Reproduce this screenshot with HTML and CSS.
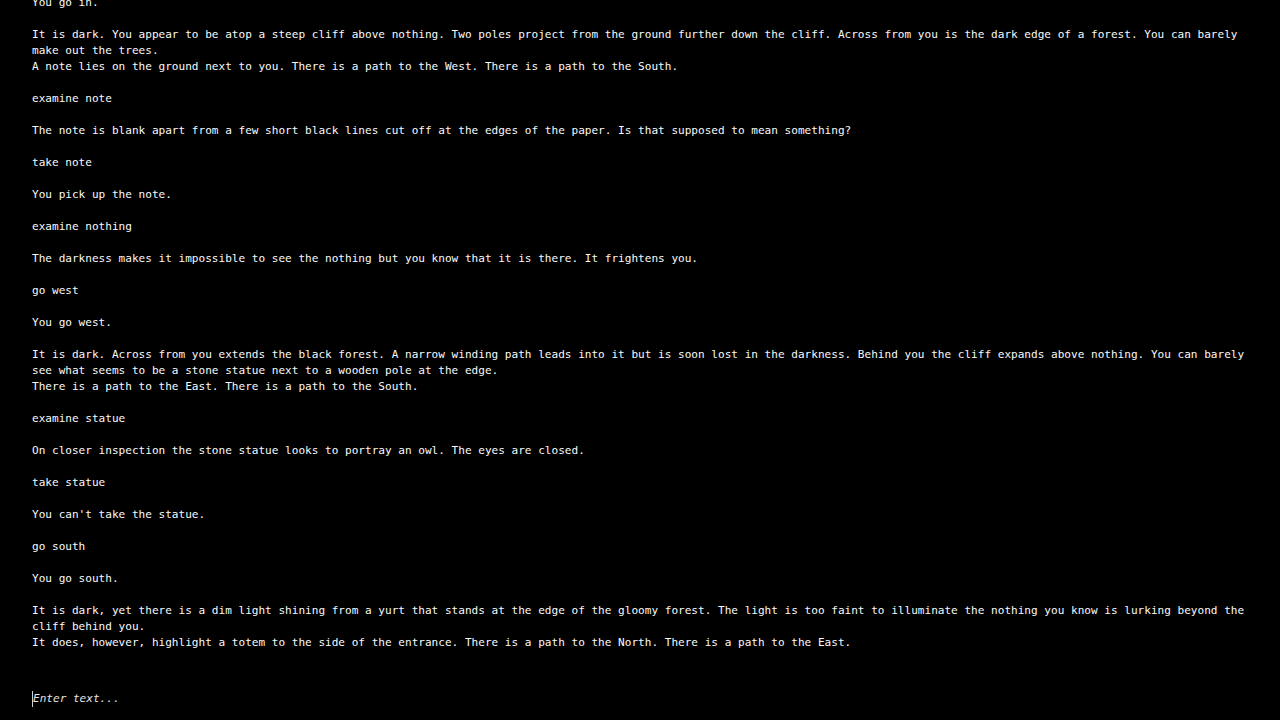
FILE: index.html
```html
<!DOCTYPE html>
<html lang="en">
<head>
<meta charset="utf-8">
<title>Text Adventure</title>
<link rel="stylesheet" href="styles.css">
</head>
<body>
<div class="terminal">
  <div class="output">
    <div class="log">
      <p>You go in.</p>
      <p>It is dark. You appear to be atop a steep cliff above nothing. Two poles project from the ground further down the cliff. Across from you is the dark edge of a forest. You can barely make out the trees.<br>A note lies on the ground next to you. There is a path to the West. There is a path to the South.</p>
      <p>examine note</p>
      <p>The note is blank apart from a few short black lines cut off at the edges of the paper. Is that supposed to mean something?</p>
      <p>take note</p>
      <p>You pick up the note.</p>
      <p>examine nothing</p>
      <p>The darkness makes it impossible to see the nothing but you know that it is there. It frightens you.</p>
      <p>go west</p>
      <p>You go west.</p>
      <p>It is dark. Across from you extends the black forest. A narrow winding path leads into it but is soon lost in the darkness. Behind you the cliff expands above nothing. You can barely see what seems to be a stone statue next to a wooden pole at the edge.<br>There is a path to the East. There is a path to the South.</p>
      <p>examine statue</p>
      <p>On closer inspection the stone statue looks to portray an owl. The eyes are closed.</p>
      <p>take statue</p>
      <p>You can't take the statue.</p>
      <p>go south</p>
      <p>You go south.</p>
      <p>It is dark, yet there is a dim light shining from a yurt that stands at the edge of the gloomy forest. The light is too faint to illuminate the nothing you know is lurking beyond the cliff behind you.<br>It does, however, highlight a totem to the side of the entrance. There is a path to the North. There is a path to the East.</p>
    </div>
  </div>
  <div class="prompt">
    <span class="caret"></span>
    <input class="command" type="text" placeholder="Enter text...">
  </div>
</div>
</body>
</html>
```

FILE: styles.css
```css
html, body {
  margin: 0;
  padding: 0;
  background: #000;
  height: 100%;
}

.terminal {
  height: 720px;
  display: flex;
  flex-direction: column;
  font-family: "DejaVu Sans Mono", "Liberation Mono", monospace;
  font-size: 11.07px;
  line-height: 16px;
  color: #fafafa;
}

.output {
  flex: 1;
  min-height: 0;
  overflow: hidden;
  display: flex;
  flex-direction: column;
  justify-content: flex-end;
  padding: 0 32px;
}

.log {
  flex-shrink: 0;
}

.log p {
  margin: 0 0 16px;
  white-space: pre-wrap;
}

.prompt {
  position: relative;
  padding: 24px 32px 13px;
  height: 16px;
}

.command {
  display: block;
  width: 100%;
  height: 16px;
  margin: 0;
  padding: 0 0 0 1px;
  border: 0;
  outline: none;
  background: transparent;
  color: #fafafa;
  font: inherit;
  line-height: 16px;
  caret-color: transparent;
}

.command::placeholder {
  color: #e4e4e4;
  font-style: italic;
  opacity: 1;
}

.caret {
  position: absolute;
  left: 32px;
  top: 24px;
  width: 1px;
  height: 16px;
  background: #cfcfcf;
}
```
